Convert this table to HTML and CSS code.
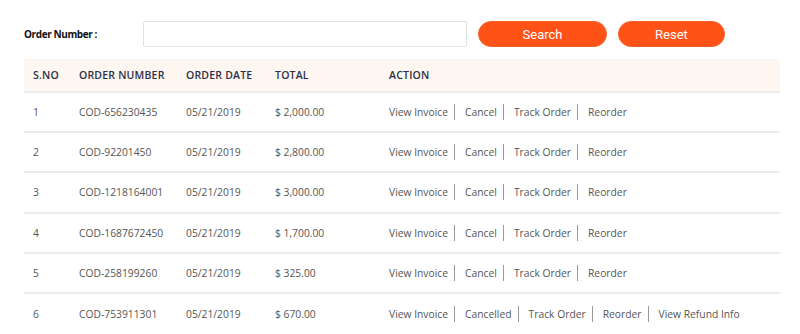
FILE: index.html
```html
<!DOCTYPE html>
<html>
<head>
<meta charset="utf-8">
<link rel="stylesheet" href="styles.css">
</head>
<body>
<div class="page">
  <form class="search">
    <label class="label">Order Number :</label>
    <input class="field" type="text">
    <button type="button" class="btn btn-search">Search</button>
    <button type="button" class="btn btn-reset">Reset</button>
  </form>
  <table class="orders">
    <thead>
      <tr><th class="c1">S.NO</th><th class="c2">ORDER NUMBER</th><th class="c3">ORDER DATE</th><th class="c4">TOTAL</th><th>ACTION</th></tr>
    </thead>
    <tbody>
      <tr><td>1</td><td>COD-656230435</td><td>05/21/2019</td><td>$ 2,000.00</td><td><div class="actions"><a>View Invoice</a><a>Cancel</a><a>Track Order</a><a>Reorder</a></div></td></tr>
      <tr><td>2</td><td>COD-92201450</td><td>05/21/2019</td><td>$ 2,800.00</td><td><div class="actions"><a>View Invoice</a><a>Cancel</a><a>Track Order</a><a>Reorder</a></div></td></tr>
      <tr><td>3</td><td>COD-1218164001</td><td>05/21/2019</td><td>$ 3,000.00</td><td><div class="actions"><a>View Invoice</a><a>Cancel</a><a>Track Order</a><a>Reorder</a></div></td></tr>
      <tr><td>4</td><td>COD-1687672450</td><td>05/21/2019</td><td>$ 1,700.00</td><td><div class="actions"><a>View Invoice</a><a>Cancel</a><a>Track Order</a><a>Reorder</a></div></td></tr>
      <tr><td>5</td><td>COD-258199260</td><td>05/21/2019</td><td>$ 325.00</td><td><div class="actions"><a>View Invoice</a><a>Cancel</a><a>Track Order</a><a>Reorder</a></div></td></tr>
      <tr><td>6</td><td>COD-753911301</td><td>05/21/2019</td><td>$ 670.00</td><td><div class="actions"><a>View Invoice</a><a>Cancelled</a><a>Track Order</a><a>Reorder</a><a>View Refund Info</a></div></td></tr>
    </tbody>
  </table>
</div>
</body>
</html>
```
FILE: styles.css
```css
* { box-sizing: border-box; }
html, body { margin: 0; padding: 0; background: #fff; }
body { font-family: "Open Sans", "Liberation Sans", sans-serif; overflow: hidden; }
.page { padding: 21px 20px 0 24px; }
.search { display: flex; align-items: center; margin: 0; height: 26px; }
.label { width: 119px; font-size: 10px; font-weight: 700; color: #111; letter-spacing: -0.4px; }
.field { width: 324px; height: 26px; border: 1px solid #e2e2e2; border-radius: 2px; margin: 0; padding: 0 6px; }
.btn { height: 26px; border: 1px solid #f4622b; border-radius: 13px; background: #ff5216; color: #fff; font-family: Roboto, "Liberation Sans", sans-serif; font-size: 13px; padding: 0; margin: 0; }
.btn-search { width: 129px; margin-left: 11px; }
.btn-reset { width: 107px; margin-left: 11px; }
.orders { width: 756px; border-collapse: collapse; margin-top: 12px; font-size: 10.3px; }
.orders th { background: #fef7f1; height: 33px; text-align: left; font-weight: 600; color: #2c2f45; letter-spacing: 0.2px; padding: 0 0 0 9px; border-bottom: 2px solid #ececec; font-size: 10.5px; }
.c1 { width: 46px; }
.c2 { width: 107px; }
.c3 { width: 89px; }
.c4 { width: 114px; }
.orders td { height: 40.2px; padding: 0 0 0 9px; color: #555; border-bottom: 2px solid #ececec; }
.orders tr:last-child td { border-bottom: none; }
.actions { display: flex; align-items: center; }
.actions a { color: #555; display: block; line-height: 16px; }
.actions a + a { border-left: 1px solid #999; padding-left: 10px; margin-left: 6px; }
```
